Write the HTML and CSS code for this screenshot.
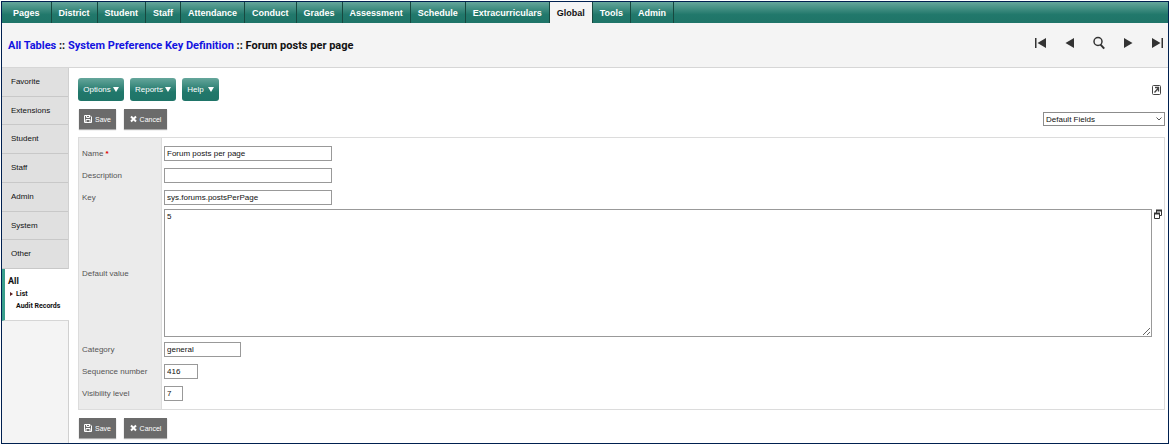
FILE: index.html
```html
<!DOCTYPE html>
<html lang="en">
<head>
    <meta charset="UTF-8">
    <meta name="viewport" content="width=device-width, initial-scale=1.0">
    <title>System Preference Key Definition</title>
    <link rel="stylesheet" href="styles.css">
</head>
<body>

    <!-- Top tabs -->
    <nav class="tabs">
        <a href="#" class="first">Pages</a>
        <a href="#">District</a>
        <a href="#">Student</a>
        <a href="#">Staff</a>
        <a href="#">Attendance</a>
        <a href="#">Conduct</a>
        <a href="#">Grades</a>
        <a href="#">Assessment</a>
        <a href="#">Schedule</a>
        <a href="#">Extracurriculars</a>
        <a href="#" class="active">Global</a>
        <a href="#">Tools</a>
        <a href="#">Admin</a>
    </nav>

    <header class="header">
        <h1><a href="#">All Tables</a> :: <a href="#">System Preference Key Definition</a> :: Forum posts per page</h1>
        <div class="record-nav">
            <button type="button" aria-label="First record"><svg width="12" height="12" viewBox="0 0 12 12"><path d="M0 1h1.500v10H0zM11 1v10L2.500 6z"/></svg></button>
            <button type="button" aria-label="Previous record"><svg width="12" height="12" viewBox="0 0 12 12"><path d="M10 1v10L1.500 6z"/></svg></button>
            <button type="button" aria-label="Search"><svg width="12" height="14" viewBox="0 0 12 14"><circle cx="5" cy="5.5" r="4" fill="none" stroke="#333" stroke-width="1.5"/><path d="M7.6 8.6l3.6 4" stroke="#333" stroke-width="2"/></svg></button>
            <button type="button" aria-label="Next record"><svg width="12" height="12" viewBox="0 0 12 12"><path d="M2 1v10L10.500 6z"/></svg></button>
            <button type="button" aria-label="Last record"><svg width="12" height="12" viewBox="0 0 12 12"><path d="M1 1v10L9.500 6zM10.500 1H12v10h-1.500z"/></svg></button>
        </div>
    </header>

    <div class="content">
        <!-- Side tabs -->
        <aside class="sidebar">
            <ul class="side-menu">
                <li><a href="#">Favorite</a></li>
                <li><a href="#">Extensions</a></li>
                <li><a href="#">Student</a></li>
                <li><a href="#">Staff</a></li>
                <li><a href="#">Admin</a></li>
                <li><a href="#">System</a></li>
                <li><a href="#">Other</a></li>
            </ul>
            <div class="side-active">
                <a href="#" class="title">All</a>
                <a href="#" class="sub current">List</a>
                <a href="#" class="sub">Audit Records</a>
            </div>
        </aside>

        <main class="main">
            <div class="toolbar">
                <button type="button" class="menu-button">Options<svg width="6" height="5" viewBox="0 0 6 5"><path d="M0 0h6L3 5z"/></svg></button>
                <button type="button" class="menu-button">Reports<svg width="6" height="5" viewBox="0 0 6 5"><path d="M0 0h6L3 5z"/></svg></button>
                <button type="button" class="menu-button help">Help<svg width="6" height="5" viewBox="0 0 6 5"><path d="M0 0h6L3 5z"/></svg></button>
                <button type="button" class="icon-button popout" aria-label="Open in new window"><svg width="9" height="10" viewBox="0 0 9 10" fill="none" stroke="#444"><rect x=".5" y=".5" width="8" height="9" rx="1"/><path d="M2.500 7.500L6 3.500M3 2.500h3.500v4" stroke-width="1.300"/></svg></button>
            </div>

            <div class="actions">
                <button type="button" class="action"><svg width="8" height="8" viewBox="0 0 8 8" fill="none" stroke="#fff"><path d="M.5.5H6L7.500 2v5.500h-7zM2.500.5v2h3v-2M2 7.500v-3h4v3"/></svg>Save</button>
                <button type="button" class="action cancel"><svg width="7" height="8" viewBox="0 0 7 8"><path d="M1 1.500l5 5M6 1.500l-5 5" stroke="#fff" stroke-width="2"/></svg>Cancel</button>
                <div class="field-set">
                    <select aria-label="Field set">
                        <option>Default Fields</option>
                    </select>
                    <svg width="6" height="4" viewBox="0 0 6 4"><path d="M.5.5L3 3 5.500.5" fill="none" stroke="#555"/></svg>
                </div>
            </div>

            <div class="form-box">
                <table class="form">
                    <tr>
                        <th><label for="name">Name <span class="required">*</span></label></th>
                        <td><input type="text" id="name" class="long" value="Forum posts per page"></td>
                    </tr>
                    <tr>
                        <th><label for="description">Description</label></th>
                        <td><input type="text" id="description" class="long"></td>
                    </tr>
                    <tr>
                        <th><label for="key">Key</label></th>
                        <td><input type="text" id="key" class="long" value="sys.forums.postsPerPage"></td>
                    </tr>
                    <tr>
                        <th><label for="value">Default value</label></th>
                        <td>
                            <div class="value">
                                <textarea id="value">5</textarea>
                                <button type="button" class="icon-button" aria-label="Expand editor"><svg width="8" height="10" viewBox="0 0 8 10" fill="#fff" stroke="#333"><path d="M2.500 1.500h5v5h-5z"/><path d="M2 1.500h6" stroke-width="2"/><path d="M.5 4.500h5v5h-5z"/><path d="M0 4.500h6" stroke-width="2"/></svg></button>
                            </div>
                        </td>
                    </tr>
                    <tr>
                        <th><label for="category">Category</label></th>
                        <td><input type="text" id="category" class="medium" value="general"></td>
                    </tr>
                    <tr>
                        <th><label for="sequence">Sequence number</label></th>
                        <td><input type="text" id="sequence" class="short" value="416"></td>
                    </tr>
                    <tr>
                        <th><label for="visibility">Visibility level</label></th>
                        <td><input type="text" id="visibility" class="tiny" value="7"></td>
                    </tr>
                </table>
            </div>

            <div class="actions bottom">
                <button type="button" class="action"><svg width="8" height="8" viewBox="0 0 8 8" fill="none" stroke="#fff"><path d="M.5.5H6L7.500 2v5.500h-7zM2.500.5v2h3v-2M2 7.500v-3h4v3"/></svg>Save</button>
                <button type="button" class="action cancel"><svg width="7" height="8" viewBox="0 0 7 8"><path d="M1 1.500l5 5M6 1.500l-5 5" stroke="#fff" stroke-width="2"/></svg>Cancel</button>
            </div>
        </main>
    </div>

</body>
</html>
```
FILE: styles.css
```css
* {
    box-sizing: border-box;
}

html {
    background-color: #fff;
}

body {
    margin: 1px;
    min-height: calc(100vh - 2px);
    border: 1px solid #002050;
    background-color: #f4f4f4;
    font-family: "Liberation Sans", Arial, sans-serif;
    font-size: 8px;
    color: #111;
    display: flex;
    flex-direction: column;
}

a {
    color: inherit;
    text-decoration: none;
}

button,
input,
select,
textarea {
    font: inherit;
    margin: 0;
}

button {
    border: none;
    padding: 0;
    cursor: pointer;
}

svg {
    display: block;
}

/* Top tabs */
.tabs {
    display: flex;
    height: 21px;
    background: linear-gradient(#65a69b, #21786b 60%, #1f7468);
    font-size: 9px;
    font-weight: bold;
    color: #fff;
}

.tabs a {
    padding: 0 7px;
    line-height: 22px;
    border-right: 1px solid #17483f;
}

.tabs .first {
    padding: 0 11px;
}

.tabs .active {
    background-color: #f4f4f4;
    color: #111;
}

/* Breadcrumb and record navigation */
.header {
    display: flex;
    justify-content: space-between;
    align-items: center;
    height: 45px;
    padding: 0 5px 0 6px;
    border-bottom: 1px solid #d6d6d6;
}

.header h1 {
    margin: 0;
    font-family: Roboto, "Liberation Sans", sans-serif;
    font-size: 11px;
    color: #111;
}

.header h1 a {
    color: #1313e0;
}

.record-nav {
    display: flex;
    align-items: center;
    gap: 17px;
    padding-bottom: 4px;
}

.record-nav button {
    background: none;
}

.record-nav svg {
    fill: #333;
}

.content {
    flex: 1;
    display: flex;
}

/* Side tabs */
.sidebar {
    width: 67px;
    flex-shrink: 0;
    border-right: 1px solid #d0d0d0;
}

.side-menu {
    display: grid;
    grid-auto-rows: 1fr;
    min-height: 201px;
    margin: 0;
    padding: 0;
    list-style: none;
}

.side-menu li {
    padding: 7px 9px;
    line-height: 13px;
    background-color: #e0e0e0;
    border-bottom: 1px solid #c8c8c8;
}

.side-active {
    display: flex;
    flex-direction: column;
    height: 52px;
    margin-right: -1px;
    padding: 6px 0 0 3px;
    background-color: #fff;
    border-left: 3px solid #3a9e8c;
    border-bottom: 1px solid #d6d6d6;
    font-family: Roboto, "Liberation Sans", sans-serif;
    font-size: 7px;
    font-weight: bold;
    white-space: nowrap;
}

.side-active .title {
    font-size: 9px;
    line-height: 13px;
}

.side-active .sub {
    padding-left: 8px;
    line-height: 12px;
}

.side-active .current {
    display: flex;
    align-items: center;
    gap: 3px;
    padding-left: 2px;
}

.side-active .current::before {
    content: "";
    border: 2px solid transparent;
    border-left: 3px solid #5c2020;
    border-right: none;
}

/* Main area */
.main {
    flex: 1;
    min-width: 0;
    padding: 10px 3px 3px 9px;
    background-color: #fff;
}

.toolbar {
    display: flex;
    gap: 6px;
}

.menu-button {
    display: flex;
    align-items: center;
    justify-content: center;
    gap: 2px;
    width: 46px;
    height: 23px;
    border-radius: 3px;
    background: linear-gradient(#65a69b, #21786b 60%, #1f7468);
    color: #fff;
}

.menu-button.help {
    width: 37px;
    gap: 4px;
}

.menu-button svg {
    fill: #fff;
}

.icon-button {
    background: none;
}

.popout {
    margin-left: auto;
    margin-right: 4px;
}

.actions {
    display: flex;
    align-items: center;
    gap: 8px;
    padding: 8px 0 8px 1px;
}

.actions.bottom {
    padding-bottom: 0;
}

.action {
    display: flex;
    align-items: center;
    justify-content: center;
    gap: 3px;
    width: 37px;
    height: 20px;
    background-color: #6b6b6b;
    box-shadow: 0 1px 1px #aaa;
    font-size: 7px;
    color: #fff;
}

.action.cancel {
    width: 43px;
}

.field-set {
    display: grid;
    align-items: center;
    width: 122px;
    margin-left: auto;
}

.field-set select,
.field-set svg {
    grid-area: 1 / 1;
}

.field-set select {
    appearance: none;
    height: 14px;
    padding: 0 2px;
    border: 1px solid #8c8c8c;
    border-radius: 0;
    background-color: #fff;
    color: #111;
}

.field-set svg {
    justify-self: end;
    margin-right: 3px;
    pointer-events: none;
}

/* Form */
.form-box {
    border: 1px solid #dcdcdc;
    background: linear-gradient(to right, #ebebeb 82px, #dcdcdc 82px, #dcdcdc 83px, #fff 83px);
    padding: 4px 0 5px;
}

.form {
    width: 100%;
    border-collapse: collapse;
}

.form th {
    width: 83px;
    height: 22px;
    padding: 0 0 0 3px;
    text-align: left;
    font-weight: normal;
    color: #555;
}

.form td {
    padding: 1px 2px;
}

.required {
    color: #e00000;
    font-weight: bold;
}

.form input,
.form textarea {
    display: block;
    border: 1px solid #999;
    background-color: #fff;
    padding: 0 2px;
    color: #111;
}

.form input {
    height: 15px;
}

.form .long {
    width: 168px;
}

.form .medium {
    width: 77px;
}

.form .short {
    width: 34px;
}

.form .tiny {
    width: 19px;
}

.value {
    display: flex;
    align-items: flex-start;
    gap: 2px;
}

.form textarea {
    flex: 1;
    height: 128px;
    line-height: 13px;
}
```
